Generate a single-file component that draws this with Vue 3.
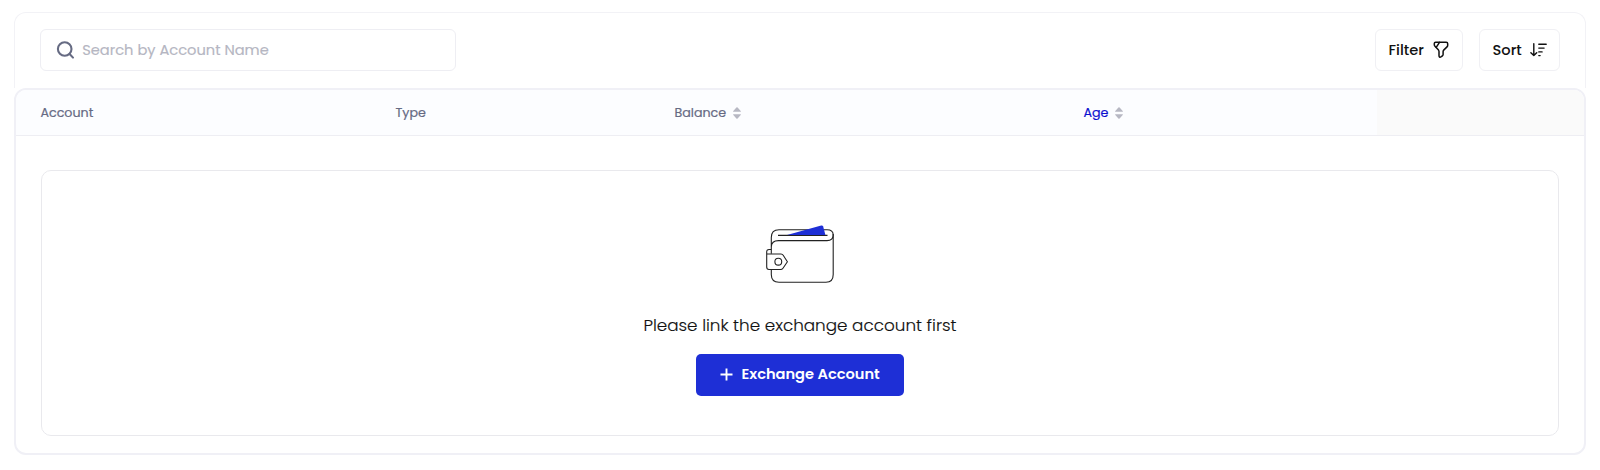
<script setup>
const columns = [
  { key: 'account', label: 'Account' },
  { key: 'type', label: 'Type' },
  { key: 'balance', label: 'Balance', sortable: true },
  { key: 'age', label: 'Age', sortable: true },
]
</script>

<template>
  <main class="page">
    <section class="toolbar">
      <label class="search">
        <svg class="search-icon" width="20" height="20" viewBox="0 0 20 20" fill="none" stroke="#666b83" stroke-width="2.1" stroke-linecap="round">
          <circle cx="8.7" cy="9" r="6.8" />
          <path d="M13.6 14 17 17.6" />
        </svg>
        <span class="placeholder">Search by Account Name</span>
      </label>
      <div class="actions">
        <button class="tool filter">
          <span>Filter</span>
          <svg width="16" height="18" viewBox="0 0 16 18" fill="none" stroke="#111" stroke-width="1.5" stroke-linecap="round" stroke-linejoin="round">
            <path d="M2.6 1.3H13.2Q14.7 1.3 14.7 2.8V4.3Q14.7 5.2 14 5.9L10.7 9.1Q10.1 9.7 10.1 10.6V13.5Q10.1 14.3 9.4 14.8L8.3 15.7Q6 17 6 14.4V10.6Q6 9.8 5.5 9.1L2 5.3Q1.3 4.5 1.3 3.8V2.6Q1.3 1.3 2.6 1.3Z" />
            <path d="M6.5 1.4 3.2 6.4" />
          </svg>
        </button>
        <button class="tool sort">
          <span>Sort</span>
          <svg width="17" height="14" viewBox="0 0 17 14" fill="none" stroke="#111" stroke-width="1.4" stroke-linecap="round" stroke-linejoin="round">
            <path d="M3.8 .8V12.5M.9 9.7 3.8 12.6 6.7 9.7" />
            <path d="M8.8 1.3H16.2M8.8 5.1H14.1M8.8 8.9H12.1M8.8 12.6H10.1" />
          </svg>
        </button>
      </div>
    </section>

    <section class="table">
      <header class="head">
        <div v-for="col in columns" :key="col.key" class="cell" :class="col.key">
          <span>{{ col.label }}</span>
          <svg v-if="col.sortable" width="8" height="12" viewBox="0 0 8 12" fill="#b7b8c3">
            <path d="M.5 4.7Q-.2 4.6 .3 3.9L3.4.6Q4 .1 4.6.6L7.7 3.9Q8.2 4.6 7.5 4.7Z" />
            <path d="M.5 7.3Q-.2 7.4 .3 8.1L3.4 11.4Q4 11.9 4.6 11.4L7.7 8.1Q8.2 7.4 7.5 7.3Z" />
          </svg>
        </div>
        <div class="cell blank"></div>
      </header>

      <div class="empty">
        <svg class="wallet" width="68" height="60" viewBox="0 0 68 60" fill="none" stroke="#222" stroke-width="1.1" stroke-linejoin="round">
          <path d="M5.3 28.8V12.5Q5.3 4.8 13 4.8H61Q67.2 4.8 67.2 10Q67.2 15.6 61 15.6H12.5Q5.3 15.6 5.3 22" />
          <path d="M67.2 9V49.5Q67.2 57.2 60 57.2H13Q5.3 57.2 5.3 49.5V44.5" />
          <path d="M12 10.4H61.5" />
          <path d="M21 9.9 55.2.5Q56.7.2 57.2 1.6L59.4 9.9Z" fill="#1e2fd6" stroke="none" />
          <path d="M5.3 24.5H3Q.7 24.5.7 27V42Q.7 44.5 3 44.5H14.5Q16.1 44.5 17 43.2L21.4 36.8 17.2 30.3Q16.4 29 15 29H.7" />
          <circle cx="12.3" cy="36.7" r="3.4" />
        </svg>
        <p class="message">Please link the exchange account first</p>
        <button class="primary">
          <svg width="13" height="13" viewBox="0 0 13 13" stroke="#fff" stroke-width="1.9"><path d="M6.5 .5V12.5M.5 6.5H12.5" /></svg>
          <span>Exchange Account</span>
        </button>
      </div>
    </section>
  </main>
</template>

<style>
body { margin: 0; background: #fff; }
</style>

<style scoped>
.page {
  box-sizing: border-box;
  width: 1600px;
  height: 470px;
  padding: 11.5px 14px 0;
  font-family: Poppins, Inter, "Noto Sans", sans-serif;
  color: #111;
  background: #fff;
}
.page * { box-sizing: border-box; }
button { font-family: inherit; margin: 0; cursor: pointer; }
.toolbar {
  display: flex;
  justify-content: space-between;
  height: 76px;
  padding: 16px 25px 0 24.5px;
  border: 1.5px solid #f2f2f6;
  border-bottom: 0;
  border-radius: 12px 12px 0 0;
}
.search {
  display: flex;
  align-items: center;
  width: 416px;
  height: 42px;
  padding-left: 15px;
  border: 1px solid #eeeef3;
  border-radius: 6px;
}
.placeholder {
  padding-top: 1px;
  margin-left: 6.7px;
  font-size: 14.65px;
  color: #b5b6c2;
  -webkit-text-stroke: 0.15px #b5b6c2;
}
.actions { display: flex; gap: 16.5px; }
.tool {
  display: flex;
  align-items: center;
  height: 42px;
  padding: 0 0 0 12.5px;
  background: #fff;
  border: 1px solid #f0f0f4;
  border-radius: 6px;
  font-size: 14.65px;
  font-weight: 500;
  line-height: 20px;
  color: #111;
}
.filter { width: 87.5px; }
.sort { width: 81px; }
.filter span { width: 44px; text-align: left; }
.sort span { width: 37.5px; text-align: left; }
.table {
  height: 367px;
  padding-bottom: 17px;
  display: flex;
  flex-direction: column;
  border: 2px solid #f0f0f6;
  border-radius: 12px;
  overflow: hidden;
}
.head {
  display: grid;
  grid-template-columns: 355px 279px 409px 318px 1fr;
  height: 46px;
  flex: none;
  background: #fcfdff;
  border-bottom: 1px solid #eeeef3;
}
.cell {
  display: flex;
  align-items: center;
  gap: 6.5px;
  padding-top: 1px;
  padding-left: 24.5px;
  font-size: 12.65px;
  font-weight: 400;
  color: #666a83;
  -webkit-text-stroke: 0.2px currentColor;
}
.age { color: #0b10cf; }
.blank { background: #fafafa; }
.empty {
  flex: 1;
  display: flex;
  flex-direction: column;
  align-items: center;
  margin: 34px 25px 0;
  padding-top: 54.5px;
  border: 1px solid #e9e9ed;
  border-radius: 10px;
}
.wallet { flex: none; }
.message {
  margin: 26px 0 15px;
  font-size: 16.8px;
  font-weight: 300;
  line-height: 28px;
  color: #111;
  -webkit-text-stroke: 0.15px #111;
}
.primary {
  display: flex;
  align-items: center;
  width: 208px;
  height: 41.5px;
  padding: 0 0 0 24px;
  gap: 8.5px;
  border: 0;
  border-radius: 5px;
  background: #1e2fd6;
  color: #fff;
  font-size: 14.6px;
  font-weight: 600;
  white-space: nowrap;
}
</style>
